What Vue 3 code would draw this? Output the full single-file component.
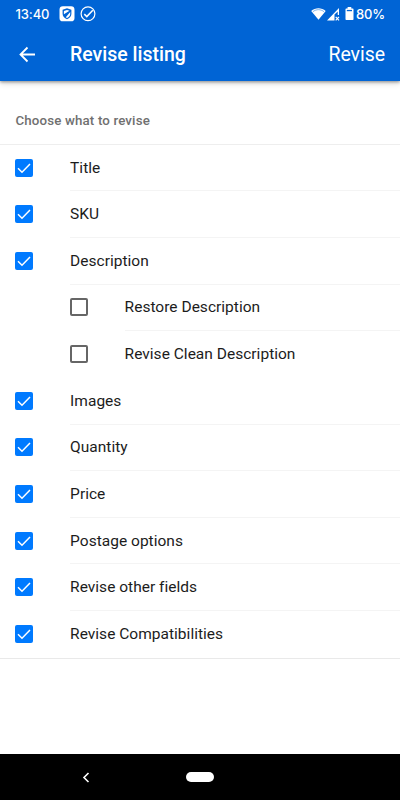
<script setup>
import { ref } from 'vue'

const items = ref([
  { label: 'Title', checked: true },
  { label: 'SKU', checked: true },
  { label: 'Description', checked: true },
  { label: 'Restore Description', checked: false, nested: true },
  { label: 'Revise Clean Description', checked: false, nested: true, plain: true },
  { label: 'Images', checked: true },
  { label: 'Quantity', checked: true },
  { label: 'Price', checked: true },
  { label: 'Postage options', checked: true },
  { label: 'Revise other fields', checked: true },
  { label: 'Revise Compatibilities', checked: true, plain: true },
])
</script>

<template>
  <div class="screen">
    <header class="top">
      <div class="status">
        <span class="time">13:40</span>
        <svg class="shield" width="16" height="16" viewBox="0 0 16 16">
          <rect x=".5" y=".3" width="15" height="15" rx="3.4" fill="#fff" />
          <path d="M8 2.300 12.400 3.700v4.100c0 2.500-1.700 4.400-4.400 5.500-2.700-1.100-4.400-3-4.400-5.500V3.700z" fill="#0064d5" />
          <path d="M4.900 8.300V5L8 3.900l2.500.9zM11.200 5.900v2.200c0 1.800-1.200 3-3.200 3.900L6.800 11.200z" fill="#fff" />
        </svg>
        <svg class="done" width="16" height="16" viewBox="0 0 16 16" fill="none" stroke="#fff" stroke-width="1.2">
          <circle cx="8" cy="7.8" r="6.9" />
          <path d="m4.3 8.1 2.5 2.5 6-6.3" stroke-width="1.5" />
        </svg>
        <span class="spacer"></span>
        <svg class="wifi" width="15" height="12" viewBox="0 0 15 12">
          <path d="M.2 3.1C4.3-.6 10.5-.6 14.7 3.1L7.5 11.8z" fill="#fff" />
          <path d="M1.900 3.700C5.400 1 9.600 1 13 3.700" fill="none" stroke="#0064d5" stroke-width=".5" />
        </svg>
        <svg class="signal" width="13" height="13" viewBox="0 0 13 13">
          <path d="M0 12.5 12 0v7h-1.300V3.500L7.500 6.600v5.900z" fill="#fff" />
          <path d="m8.700 8.900 3.300 3.400m0-3.400-3.300 3.400" stroke="#fff" stroke-width="1.2" />
        </svg>
        <svg class="battery" width="9" height="14" viewBox="0 0 9 14">
          <path d="M2.600 0h3.700v1.500h1.500q.7 0 .7.700v10q0 .8-.8.800h-6.400q-.8 0-.8-.8v-10q0-.7.700-.7h1.400z" fill="#fff" />
          <path d="M1.800 2.900h5.200v1.300H1.800z" fill="#0064d5" />
        </svg>
        <span class="percent">80%</span>
      </div>
      <div class="bar">
        <svg class="back" width="18" height="18" viewBox="0 0 18 18" fill="none" stroke="#fff" stroke-width="1.800">
          <path d="M17 8.500H2.700M9.500 1.500 2.500 8.500l7 7" />
        </svg>
        <h1>Revise listing</h1>
        <button class="action">Revise</button>
      </div>
    </header>
    <main>
      <h2>Choose what to revise</h2>
      <ul>
        <li v-for="item in items" :key="item.label" :class="{ nested: item.nested }">
          <button
            class="box" :class="{ on: item.checked }" role="checkbox"
            :aria-checked="item.checked" :aria-label="item.label" @click="item.checked = !item.checked"
          >
            <svg v-if="item.checked" width="18" height="18" viewBox="0 0 18 18">
              <path d="m3 9.200 4 4 8-8.200" fill="none" stroke="#fff" stroke-width="1.500" />
            </svg>
          </button>
          <span class="label" :class="{ plain: item.plain }">{{ item.label }}</span>
        </li>
      </ul>
    </main>
    <nav>
      <svg class="nav-back" width="8" height="11" viewBox="0 0 8 11">
        <path d="M6.500 1 2 5.500 6.500 10" fill="none" stroke="#fff" stroke-width="1.600" />
      </svg>
      <span class="home"></span>
    </nav>
  </div>
</template>

<style>
body { margin: 0; }
</style>

<style scoped>
.screen {
  width: 400px; height: 800px; display: flex; flex-direction: column;
  background: #fff; font-family: Roboto, sans-serif; overflow: hidden;
}
button { border: 0; padding: 0; background: none; font-family: inherit; }
.top {
  flex: none; height: 81px; box-sizing: border-box; background: #0064d5; color: #fff;
  box-shadow: 0 1px 3px rgba(0, 0, 0, .4), 0 3px 6px rgba(0, 0, 0, .12);
}
.status { height: 28px; display: flex; align-items: center; padding: 0 16px 0 15.500px; }
.time { width: 43.500px; font-family: Inter, sans-serif; font-size: 13px; font-weight: 500; letter-spacing: -.1px; }
.done { margin-left: 5px; }
.spacer { flex: 1; }
.signal { margin-left: 1px; }
.battery { margin-left: 5px; }
.percent { width: 28px; margin-left: 2.500px; font-family: Inter, sans-serif; font-size: 13px; font-weight: 500; letter-spacing: -.2px; }
.bar { height: 53px; display: flex; align-items: center; padding: 0 15px 0 18px; }
.back { flex: none; }
h1 { flex: 1; margin: 0 0 0 34px; font-size: 19.500px; line-height: 24px; font-weight: 500; }
.action { color: #fff; font-size: 19.500px; line-height: 24px; letter-spacing: -.05px; }
main { flex: 1; }
h2 {
  height: 63.750px; box-sizing: border-box; margin: 0; padding: 31px 15.500px 0; border-bottom: 1px solid #eee;
  color: #707070; font-size: 13.300px; line-height: 18px; font-weight: 500; letter-spacing: .15px;
}
ul { margin: 0; padding: 0; list-style: none; border-bottom: 1px solid #e9e9e9; }
li { height: 46.640px; display: flex; align-items: center; padding-left: 15.400px; }
li.nested { padding-left: 69.900px; }
.box {
  flex: none; width: 18px; height: 18px; box-sizing: border-box; margin-bottom: 1px;
  border: 2px solid #666; border-radius: 2px;
}
.box.on { border: 0; background: #007aff; }
.box svg { display: block; }
.label {
  flex: 1; align-self: stretch; display: flex; align-items: center; margin-left: 36.700px;
  border-bottom: 1px solid #f4f4f4; color: #1c1c1c; font-size: 15.500px; letter-spacing: .02px;
}
.label.plain { border-bottom-color: transparent; }
nav { flex: none; height: 46px; display: flex; align-items: center; background: #000; padding-left: 82px; }
.home { width: 28px; height: 10px; margin-left: 96px; border-radius: 5px; background: #fff; }
</style>
